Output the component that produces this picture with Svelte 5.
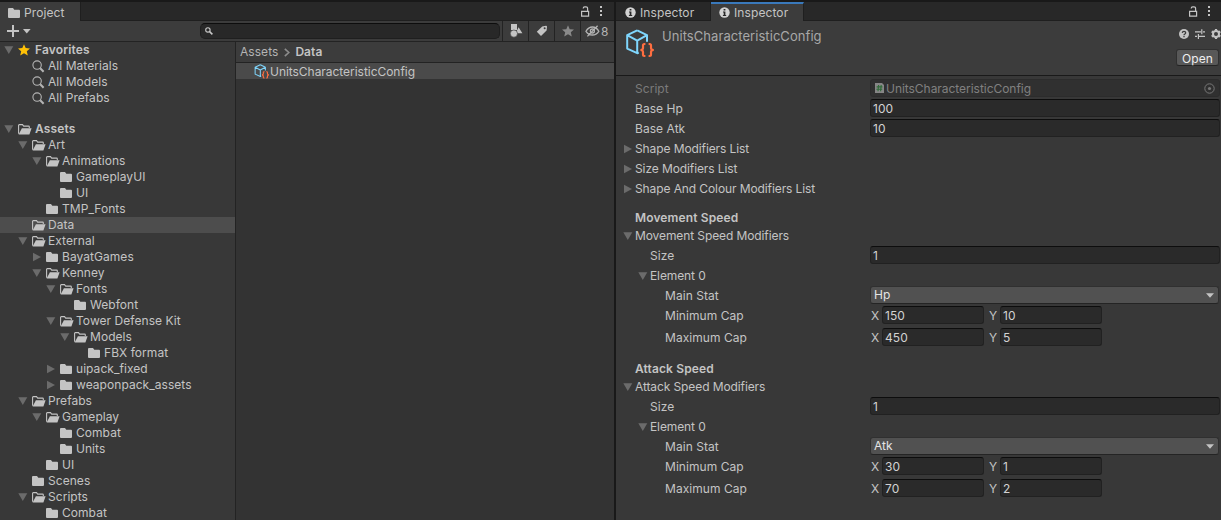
<script>
  const tree = [
    { d: 0, t: 'Favorites', icon: 'star', open: true, bold: true },
    { d: 1, t: 'All Materials', icon: 'search' },
    { d: 1, t: 'All Models', icon: 'search' },
    { d: 1, t: 'All Prefabs', icon: 'search' },
    { d: 0, t: 'Assets', icon: 'open', open: true, bold: true, gap: true },
    { d: 1, t: 'Art', icon: 'open', open: true },
    { d: 2, t: 'Animations', icon: 'open', open: true },
    { d: 3, t: 'GameplayUI', icon: 'folder' },
    { d: 3, t: 'UI', icon: 'folder' },
    { d: 2, t: 'TMP_Fonts', icon: 'folder' },
    { d: 1, t: 'Data', icon: 'open', selected: true },
    { d: 1, t: 'External', icon: 'open', open: true },
    { d: 2, t: 'BayatGames', icon: 'folder', open: false },
    { d: 2, t: 'Kenney', icon: 'open', open: true },
    { d: 3, t: 'Fonts', icon: 'open', open: true },
    { d: 4, t: 'Webfont', icon: 'folder' },
    { d: 3, t: 'Tower Defense Kit', icon: 'open', open: true },
    { d: 4, t: 'Models', icon: 'open', open: true },
    { d: 5, t: 'FBX format', icon: 'folder' },
    { d: 3, t: 'uipack_fixed', icon: 'folder', open: false },
    { d: 3, t: 'weaponpack_assets', icon: 'folder', open: false },
    { d: 1, t: 'Prefabs', icon: 'open', open: true },
    { d: 2, t: 'Gameplay', icon: 'open', open: true },
    { d: 3, t: 'Combat', icon: 'folder' },
    { d: 3, t: 'Units', icon: 'folder' },
    { d: 2, t: 'UI', icon: 'folder' },
    { d: 1, t: 'Scenes', icon: 'folder' },
    { d: 1, t: 'Scripts', icon: 'open', open: true },
    { d: 2, t: 'Combat', icon: 'folder' },
  ];

  const section = (name, stat, min, max) => [
    { t: name, header: true },
    { t: name + ' Modifiers', open: true },
    { t: 'Size', d: 1, value: '1' },
    { t: 'Element 0', d: 1, open: true },
    { t: 'Main Stat', d: 2, select: stat },
    { t: 'Minimum Cap', d: 2, vec: min },
    { t: 'Maximum Cap', d: 2, vec: max, spaced: true },
  ];

  const props = [
    { t: 'Script', script: 'UnitsCharacteristicConfig' },
    { t: 'Base Hp', value: '100' },
    { t: 'Base Atk', value: '10' },
    { t: 'Shape Modifiers List', open: false },
    { t: 'Size Modifiers List', open: false },
    { t: 'Shape And Colour Modifiers List', open: false },
    ...section('Movement Speed', 'Hp', ['150', '10'], ['450', '5']),
    ...section('Attack Speed', 'Atk', ['30', '1'], ['70', '2']),
  ];
</script>

{#snippet arrow(open)}
  <svg class="arrow" width="10" height="10" viewBox="0 0 10 10">
    {#if open}<path d="M.3 1.2H9.3L4.8 9z" />{:else}<path d="M1 .8V9.2L9 5z" />{/if}
  </svg>
{/snippet}

{#snippet lock()}
  <svg width="10" height="12" viewBox="0 0 10 12" fill="none" stroke="#c4c4c4" stroke-width="1.2">
    <path d="M1.6 6.4H8.6V11.2H1.6zM7.6 6.3V3.4Q7.6 1.8 6 1.8H4.8Q3.2 1.8 3.2 3.4" />
  </svg>
{/snippet}

{#snippet dots()}
  <svg width="4" height="12" viewBox="0 0 4 12" fill="#c4c4c4">
    <path d="M1 1H3V3H1zM1 5H3V7H1zM1 9H3V11H1z" />
  </svg>
{/snippet}

{#snippet info()}
  <svg width="11" height="11" viewBox="0 0 11 11">
    <circle cx="5.5" cy="5.5" r="5.2" fill="#d2d2d2" />
    <path d="M4.6 1.9H6.4V3.4H4.6zM4 4.4H6.4V8H7.2V9H3.9V8H4.7V5.4H4z" fill="#282828" />
  </svg>
{/snippet}

{#snippet folder()}
  <svg width="12" height="10" viewBox="0 0 12 10" fill="#c4c4c4">
    <path d="M0 1Q0 0 1 0H5L6.3 1.8H11Q12 1.8 12 2.8V9Q12 10 11 10H1Q0 10 0 9z" />
  </svg>
{/snippet}

{#snippet cube(size)}
  <svg width={size} height={size} viewBox="0 0 29 29" fill="none">
    <path d="M12.2 1.4L22 6.2V12.8M12.2 1.4L2.2 6.2V19.6L12.2 24.2V11.6L2.2 6.2M12.2 11.6L22 6.2M12.2 24.2L13.8 23.6" stroke="#7fd6fd" stroke-width="2" stroke-linejoin="round" />
    <path d="M20.4 15H19.4Q18 15 18 16.4V19Q18 21 15.4 21Q18 21 18 23V25.6Q18 27 19.4 27H20.4M23.6 15H24.6Q26 15 26 16.4V19Q26 21 28.8 21Q26 21 26 23V25.6Q26 27 24.6 27H23.6" stroke="#ff6e40" stroke-width="2.2" />
  </svg>
{/snippet}

<div class="app">
  <section class="project">
    <div class="tabs">
      <div class="tab ptab">{@render folder()}<span>Project</span></div>
      <div class="wincontrols">{@render lock()}{@render dots()}</div>
    </div>
    <div class="toolbar">
      <svg class="plus" width="24" height="12" viewBox="0 0 24 12">
        <path d="M0 6H12M6 0V12" stroke="#c4c4c4" stroke-width="2" />
        <path d="M16 4H23.6L19.8 8.4z" fill="#c4c4c4" />
      </svg>
      <div class="search">
        <svg width="8" height="8" viewBox="0 0 8 8" fill="none" stroke="#c8c8c8">
          <circle cx="2.9" cy="2.9" r="2.2" stroke-width="1.1" /><path d="M4.6 4.6L7.4 7.4" stroke-width="1.5" />
        </svg>
      </div>
      <div class="tool">
        <svg width="14" height="14" viewBox="0 0 14 14" fill="#c4c4c4">
          <path d="M2 0H8V6H2zM9.6 3.2L13.4 9.2H8.6L7.6 7.2z" /><circle cx="4.9" cy="9.6" r="3.6" stroke="#3c3c3c" stroke-width=".6" />
        </svg>
      </div>
      <div class="tool">
        <svg width="12" height="12" viewBox="0 0 12 12" fill="#c4c4c4">
          <path fill-rule="evenodd" d="M6.2 1.4L10 .8Q11 .8 11 1.8L10.6 5.4L5 11L.8 6.8zM8.6 2.3A1 1 0 1 0 8.7 4.3A1 1 0 1 0 8.6 2.3z" />
        </svg>
      </div>
      <div class="tool">
        <svg width="12" height="12" viewBox="0 0 12 12" fill="#8a8a8a">
          <path d="M6 .2L7.7 4.2L12 4.5L8.8 7.3L9.8 11.6L6 9.3L2.2 11.6L3.2 7.3L0 4.5L4.3 4.2z" />
        </svg>
      </div>
      <div class="tool eye">
        <svg width="15" height="12" viewBox="0 0 15 12" fill="none" stroke="#b4b4b4" stroke-width="1.3">
          <path d="M1 6.3Q3.4 2 7.4 2T13.8 6.3Q11.4 10 7.4 10T1 6.3zM2.4 11.4L12.6 .8" /><circle cx="7.4" cy="6" r="2" />
        </svg><span>8</span>
      </div>
    </div>
    <div class="panes">
      <div class="tree">
        {#each tree as n}
          <div class="node" class:selected={n.selected} class:bold={n.bold} class:gap={n.gap} style:padding-left="{4 + n.d * 14}px">
            <span class="fold">{#if n.open !== undefined}{@render arrow(n.open)}{/if}</span>
            <span class="icon">
              {#if n.icon === 'star'}
                <svg width="12" height="12" viewBox="0 0 12 12" fill="#ffc107"><path d="M6 .2L7.7 4.1L12 4.5L8.8 7.3L9.8 11.5L6 9.3L2.2 11.5L3.2 7.3L0 4.5L4.3 4.1z" /></svg>
              {:else if n.icon === 'search'}
                <svg width="13" height="13" viewBox="0 0 13 13" fill="none" stroke="#b4b4b4"><circle cx="5.1" cy="5.1" r="4.2" stroke-width="1.1" /><path d="M8.2 8.2L11.6 11.8" stroke-width="2" /></svg>
              {:else if n.icon === 'open'}
                <svg width="14" height="11" viewBox="0 0 14 11">
                  <path d="M.6 9.8V1.3Q.6 .6 1.3 .6H4.5L5.7 2.1H10.6Q11.3 2.1 11.3 2.8V4" fill="none" stroke="#c4c4c4" stroke-width="1.1" />
                  <path d="M3.9 4.2H13.6L11.4 10.4H.6z" fill="#c4c4c4" />
                </svg>
              {:else}
                {@render folder()}
              {/if}
            </span>
            <span class="label">{n.t}</span>
          </div>
        {/each}
      </div>
      <div class="files">
        <div class="crumbs">
          <span>Assets</span>
          <svg width="6" height="9" viewBox="0 0 6 9" fill="none" stroke="#8c8c8c" stroke-width="1.6"><path d="M.8 .8L4.8 4.5L.8 8.2" /></svg>
          <b>Data</b>
        </div>
        <div class="file">{@render cube(15)}<span class="asset">UnitsCharacteristicConfig</span></div>
      </div>
    </div>
  </section>

  <section class="inspector">
    <div class="tabs">
      <div class="tab itab">{@render info()}<span>Inspector</span></div>
      <div class="tab itab active">{@render info()}<span>Inspector</span></div>
      <div class="wincontrols">{@render lock()}{@render dots()}</div>
    </div>
    <div class="head">
      <div class="bigicon">{@render cube(29)}</div>
      <div class="title">UnitsCharacteristicConfig</div>
      <div class="actions">
        <div class="helpers">
          <svg width="10" height="10" viewBox="0 0 10 10"><circle cx="5" cy="5" r="5" fill="#c4c4c4" /><path d="M3.3 3.9Q3.4 2.4 5 2.4T6.7 3.8Q6.7 4.6 5.7 5.1Q5 5.4 5 6.2M5 7V8.2" fill="none" stroke="#3c3c3c" stroke-width="1.3" /></svg>
          <svg width="10" height="10" viewBox="0 0 10 10" fill="none" stroke="#c4c4c4" stroke-width="1.2"><path d="M0 2.8H6M8 2.8H10M6.8 .2V5.2M0 7.4H2M4 7.4H10M3.4 5V10" /></svg>
          <svg width="10" height="10" viewBox="0 0 10 10" fill="none" stroke="#c4c4c4"><circle cx="5" cy="5" r="3" stroke-width="2" /><path d="M5 0V1.5M5 8.5V10M.7 2.5L2 3.2M8 6.8L9.3 7.5M.7 7.5L2 6.8M8 3.2L9.3 2.5" stroke-width="2.2" /></svg>
        </div>
        <div class="button">Open</div>
      </div>
    </div>
    <div class="props">
      {#each props as p}
        <div class="prop" class:header={p.header} class:spaced={p.spaced} class:disabled={p.script} class:list={p.open !== undefined}>
          <div class="name" style:padding-left="{6 + (p.d ?? 0) * 15}px">
            <span class="pfold">{#if p.open !== undefined}{@render arrow(p.open)}{/if}</span>
            <span>{p.t}</span>
          </div>
          {#if p.value}
            <div class="field wide">{p.value}</div>
          {:else if p.script}
            <div class="field wide obj">
              <svg width="9" height="10" viewBox="0 0 9 10"><path d="M0 0H7L9 2V10H0z" fill="#868686" /><path d="M3.6 2L3 8.2M6.2 2L5.6 8.2M1.6 3.9H7.4M1.4 6.2H7.2" stroke="#2f6a38" stroke-width="1.1" /></svg>
              <span class="asset">{p.script}</span>
              <svg class="pick" width="11" height="11" viewBox="0 0 11 11"><circle cx="5.5" cy="5.5" r="4.7" fill="none" stroke="#777" /><circle cx="5.5" cy="5.5" r="1.6" fill="#777" /></svg>
            </div>
          {:else if p.select}
            <div class="select"><span>{p.select}</span><svg width="8" height="5" viewBox="0 0 8 5"><path d="M0 .2H8L4 4.8z" fill="#c4c4c4" /></svg></div>
          {:else if p.vec}
            <div class="vec">
              <span class="axis">X</span><div class="field num">{p.vec[0]}</div>
              <span class="axis y">Y</span><div class="field num">{p.vec[1]}</div>
            </div>
          {/if}
        </div>
      {/each}
    </div>
  </section>
</div>

<style>
  :global(body) { background: #191919; overflow: hidden; }
  .app {
    display: flex; gap: 2px; width: 1221px; height: 520px; box-sizing: border-box; padding-top: 2px;
    background: #191919; color: #c4c4c4; font: 12px/16px Inter, "Liberation Sans", sans-serif;
    letter-spacing: 0.05px; white-space: nowrap; overflow: hidden;
  }
  svg { display: block; flex: none; }
  section { display: flex; flex-direction: column; overflow: hidden; }
  .project { width: 614px; background: #383838; }
  .inspector { width: 605px; background: #383838; }
  .tabs { display: flex; height: 19px; flex: none; background: #282828; box-shadow: inset 0 -1px #1f1f1f; }
  .tab { display: flex; align-items: center; box-sizing: border-box; height: 19px; padding-top: 2px; letter-spacing: 0.1px; }
  .ptab { width: 81px; padding-left: 8px; gap: 4px; background: #3c3c3c; border-right: 1px solid #1f1f1f; }
  .itab { width: 95px; padding-left: 9px; gap: 4px; border-right: 1px solid #1f1f1f; }
  .itab.active { width: 93px; padding-left: 8px; padding-top: 0; background: #3c3c3c; border-top: 2px solid #3a79bb; }
  .wincontrols { display: flex; margin-left: auto; gap: 9px; padding: 3px 11px 0 0; }
  .inspector .wincontrols { padding-right: 10px; }
  .toolbar { display: flex; align-items: center; height: 21px; flex: none; box-sizing: border-box; background: #3c3c3c; border-bottom: 1px solid #232323; }
  .plus { margin-left: 7px; }
  .search { display: flex; align-items: center; width: 300px; height: 16px; margin-left: 169px; margin-right: 2px; padding-left: 4px; box-sizing: border-box; background: #282828; border: 1px solid #1f1f1f; border-top-color: #0d0d0d; border-radius: 5px; }
  .tool { display: flex; align-items: center; justify-content: center; width: 26px; height: 20px; box-sizing: border-box; border-left: 1px solid #232323; }
  .tool.eye { width: 34px; justify-content: flex-start; padding-left: 4px; gap: 1px; color: #b4b4b4; }
  .tool.eye span { padding-top: 2px; }
  .panes { display: flex; flex: 1; min-height: 0; }
  .tree { width: 235px; border-right: 1px solid #232323; overflow: hidden; flex: none; }
  .node { display: flex; align-items: center; height: 16px; box-sizing: border-box; }
  .node.gap { margin-top: 15px; }
  .selected { background: #4d4d4d; }
  .bold, .prop.header { font-weight: 600; letter-spacing: 0.13px; }
  .fold { width: 14px; }
  .arrow { fill: #6b6b6b; }
  .icon { width: 16px; display: flex; }
  .bold .label { margin-left: 1px; }
  .files { flex: 1; background: #333; }
  .crumbs { display: flex; align-items: center; height: 21px; box-sizing: border-box; padding-left: 4px; gap: 6px; background: #3c3c3c; border-bottom: 1px solid #232323; color: #b4b4b4; }
  .crumbs b { font-weight: 600; color: #c4c4c4; margin-left: -1px; }
  .file { display: flex; align-items: center; height: 16px; padding-left: 18px; gap: 1px; background: #4a4a4a; }
  .file .asset { padding-top: 2px; }
  .asset { letter-spacing: -0.04px; }
  .head { display: flex; height: 55px; flex: none; box-sizing: border-box; background: #3c3c3c; border-bottom: 1px solid #191919; }
  .bigicon { padding: 8px 0 0 9px; }
  .title { padding: 7px 0 0 8px; font-size: 13px; color: #a8a8a8; letter-spacing: 0.06px; }
  .actions { display: flex; flex-direction: column; margin-left: auto; }
  .helpers { display: flex; gap: 6px; padding: 8px 0 0 3px; }
  .button { width: 43px; height: 17px; margin-top: 10px; box-sizing: border-box; border: 1px solid #303030; border-bottom-color: #242424; border-radius: 3px; background: #585858; color: #eee; line-height: 17px; text-align: center; }
  .props { display: flex; flex-direction: column; padding-top: 3px; }
  .prop { display: flex; flex: none; height: 18px; margin-bottom: 2px; }
  .prop.header { margin: 9px 0 0; }
  .prop.spaced { margin-top: 2px; margin-bottom: 4px; }
  .prop.list { letter-spacing: -0.1px; }
  .name { display: flex; align-items: center; width: 254px; padding-top: 1px; box-sizing: border-box; flex: none; }
  .pfold { width: 12px; padding-left: 1px; }
  .field { height: 18px; box-sizing: border-box; padding-left: 2px; line-height: 18px; border: 1px solid #212121; border-top-color: #0d0d0d; border-radius: 3px; background: #2a2a2a; color: #d2d2d2; }
  .wide { width: 350px; }
  .obj { display: flex; align-items: center; padding-left: 4px; gap: 2px; color: #808080; background: #303030; border-color: #2c2c2c; }
  .obj .asset { padding-top: 2px; }
  .disabled .name { color: #7b7b7b; padding-top: 2px; }
  .pick { margin-left: auto; margin-right: 4px; }
  .select { display: flex; align-items: center; justify-content: space-between; width: 349px; height: 18px; box-sizing: border-box; padding: 0 4px 0 3px; border: 1px solid #303030; border-bottom-color: #242424; border-radius: 3px; background: #515151; color: #e4e4e4; }
  .vec { display: flex; align-items: center; }
  .axis { width: 11px; padding-left: 1px; padding-top: 1px; }
  .axis.y { padding-left: 5px; }
  .num { width: 102px; }
</style>
